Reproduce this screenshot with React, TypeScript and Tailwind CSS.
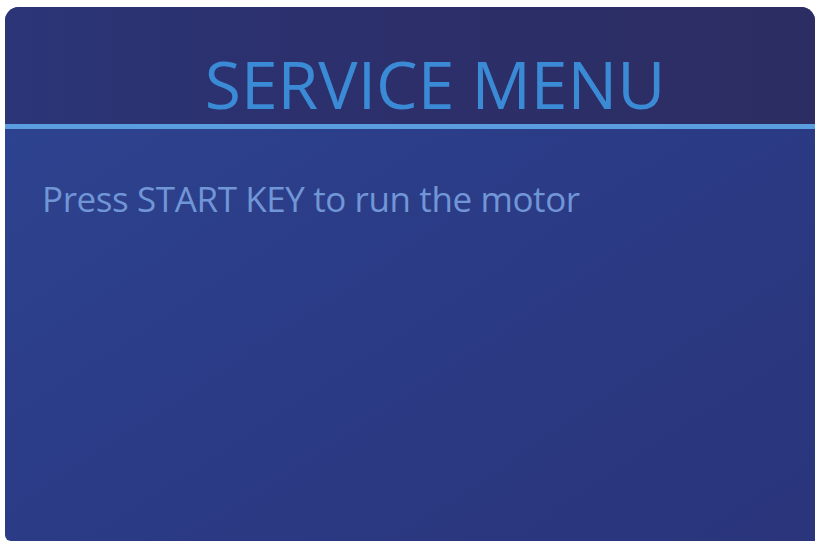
export default function App() {
  return (
    <div className="w-[821px] h-[549px] bg-white pt-[7px] pl-[5px] overflow-hidden">
      {/* LCD SCREEN */}
      <div
        className="w-[810px] h-[534px] rounded-t-[14px] rounded-bl-[6px] overflow-hidden flex flex-col bg-gradient-to-br from-[#2e4592] via-[#2b3b86] to-[#2a357b]"
        style={{ fontFamily: '"Open Sans", "DejaVu Sans", sans-serif' }}
      >
        {/* HEADER */}
        <div className="h-[117px] shrink-0 bg-gradient-to-r from-[#2b3577] via-[#2c2f6a] to-[#2c2d62] flex items-end justify-center pl-[50px] pb-[8px]">
          <h1 className="text-[66px] leading-none tracking-[0px] text-[#3b8ad6] font-normal">SERVICE MENU</h1>
        </div>
        <div className="h-[5px] shrink-0 bg-[#5a9ee0]" />

        {/* BODY */}
        <div className="flex-1 pt-[52px] pl-[37px]">
          <p className="text-[35px] leading-none tracking-[-0.4px] text-[#7196d6]">Press START KEY to run the motor</p>
        </div>
      </div>
    </div>
  );
}
